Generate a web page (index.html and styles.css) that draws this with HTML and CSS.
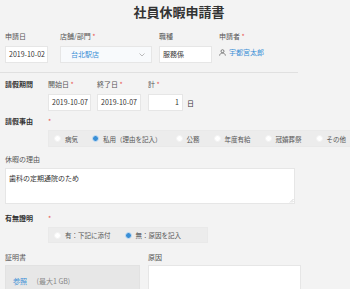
FILE: index.html
```html
<!DOCTYPE html>
<html lang="ja">
<head>
  <meta charset="UTF-8" />
  <title>社員休暇申請書</title>
  <link rel="stylesheet" href="styles.css">
</head>
<body>

<h1 class="title">社員休暇申請書</h1>

<div class="row-top">
  <div class="field f-date">
    <div class="label">申請日</div>
    <div class="input">2019-10-02</div>
  </div>
  <div class="field f-dept">
    <div class="label">店舗/部門 <span class="req">*</span></div>
    <div class="input select">
      <span class="link">台北駅店</span>
      <svg class="chevron" width="6" height="4" viewBox="0 0 6 4"><path d="M0.5 0.5 L3 3 L5.5 0.5" fill="none" stroke="#aaa" stroke-width="0.8"/></svg>
    </div>
  </div>
  <div class="field f-job">
    <div class="label">職種</div>
    <div class="input">服務係</div>
  </div>
  <div class="field">
    <div class="label">申請者 <span class="req">*</span></div>
    <div class="user">
      <svg width="7" height="7" viewBox="0 0 7 7"><circle cx="3.5" cy="2.2" r="1.5" fill="none" stroke="#666" stroke-width="0.8"/><path d="M0.6 6.6 C0.8 4.8 2 4.1 3.5 4.1 C5 4.1 6.2 4.8 6.4 6.6" fill="none" stroke="#666" stroke-width="0.8"/></svg>
      <span class="link">宇都宮太郎</span>
    </div>
  </div>
</div>

<div class="divider"></div>

<div class="section s-period">
  <div class="section-label">請假期間</div>
  <div class="field f-start">
    <div class="label">開始日 <span class="req">*</span></div>
    <div class="input">2019-10-07</div>
  </div>
  <div class="field f-end">
    <div class="label">終了日 <span class="req">*</span></div>
    <div class="input">2019-10-07</div>
  </div>
  <div class="field">
    <div class="label">計 <span class="req">*</span></div>
    <div class="days">
      <div class="input num">1</div>
      <span class="unit">日</span>
    </div>
  </div>
</div>

<div class="section s-reason">
  <div class="section-label">請假事由</div>
  <div class="field f-wide">
    <div class="label"><span class="req">*</span></div>
    <div class="radio-group">
      <span class="radio"><i class="dot"></i>病気</span>
      <span class="radio"><i class="dot on"></i>私用（理由を記入）</span>
      <span class="radio"><i class="dot"></i>公務</span>
      <span class="radio"><i class="dot"></i>年度有給</span>
      <span class="radio"><i class="dot"></i>冠婚葬祭</span>
      <span class="radio"><i class="dot"></i>その他</span>
    </div>
  </div>
</div>

<div class="block b-why">
  <div class="label">休暇の理由</div>
  <div class="textarea">
    歯科の定期通院のため
    <svg class="grip" width="5" height="5" viewBox="0 0 5 5"><path d="M4.5 1 L1 4.5 M4.5 3 L3 4.5" stroke="#bbb" stroke-width="0.6"/></svg>
  </div>
</div>

<div class="section s-proof">
  <div class="section-label">有無證明</div>
  <div class="field">
    <div class="label"><span class="req">*</span></div>
    <div class="radio-group short">
      <span class="radio"><i class="dot"></i>有：下記に添付</span>
      <span class="radio"><i class="dot on"></i>無：原因を記入</span>
    </div>
  </div>
</div>

<div class="row-bottom">
  <div class="field f-file">
    <div class="label">証明書</div>
    <div class="file-box">
      <span class="link">参照</span>
      <span class="limit">(最大1 GB)</span>
    </div>
  </div>
  <div class="field f-cause">
    <div class="label">原因</div>
    <div class="cause-box"></div>
  </div>
</div>

</body>
</html>
```

FILE: styles.css
```css
* {
  box-sizing: border-box;
}

body {
  margin: 0;
  width: 350px;
  height: 289px;
  overflow: hidden;
  background: #f3f3f3;
  font-family: "Noto Sans CJK JP", "Noto Sans", sans-serif;
  font-size: 7px;
  color: #555;
}

.title {
  margin: 0;
  padding: 4px 0 0 8px;
  height: 26px;
  text-align: center;
  font-size: 13px;
  line-height: 16px;
  color: #333;
}

.label {
  height: 10px;
  line-height: 10px;
  margin-bottom: 5px;
  white-space: nowrap;
}

.req {
  color: #e8584f;
}

.link {
  color: #3a8fd6;
}

.input {
  height: 17px;
  line-height: 15px;
  padding: 0 3px;
  background: #fff;
  border: 1px solid #e6e6e6;
  color: #333;
  white-space: nowrap;
}

.row-top {
  display: flex;
  gap: 7px;
  padding: 5px 0 0 5px;
}

.f-date { width: 48px; }
.f-date .input { width: 43px; }
.f-dept { width: 92px; }
.f-job { width: 53px; }

.select {
  display: flex;
  align-items: center;
  justify-content: space-between;
  padding: 0 6px 0 10px;
  background: #f8fafc;
}

.user {
  display: flex;
  align-items: center;
  gap: 3px;
  height: 12px;
}

.divider {
  width: 298px;
  height: 1px;
  margin-top: 9px;
  background: #e0e0e0;
}

.section {
  display: flex;
  padding-left: 5px;
}

.section-label {
  width: 43px;
  flex-shrink: 0;
  line-height: 10px;
  font-weight: bold;
  color: #333;
}

.s-period {
  margin-top: 6px;
}

.f-start { width: 43px; margin-right: 6px; }
.f-end { width: 44px; margin-right: 7px; }

.days {
  display: flex;
  align-items: center;
  gap: 4px;
}

.num {
  width: 35px;
  text-align: right;
}

.unit {
  color: #333;
}

.s-reason {
  margin-top: 5px;
}

.f-wide {
  width: 302px;
  overflow: hidden;
}

.s-reason .label,
.s-proof .label {
  margin-bottom: 4px;
}

.radio-group {
  display: flex;
  align-items: center;
  height: 17px;
  padding: 0 12px 0 5px;
  background: #ececec;
  border: 1px solid #e9e9e9;
  white-space: nowrap;
  font-size: 6.5px;
  color: #555;
}

.s-reason .radio-group {
  width: max-content;
}

.radio {
  display: flex;
  align-items: center;
  gap: 4px;
  margin-right: 14px;
}

.dot {
  display: block;
  width: 7px;
  height: 7px;
  border-radius: 50%;
  background: #fff;
  border: 1px solid #f2f2f2;
}

.dot.on {
  background: #3a8fd6;
  border: 1px solid #cfe3f5;
}

.b-why {
  margin-top: 7px;
  padding-left: 5px;
}

.b-why .label {
  margin-bottom: 4px;
}

.textarea {
  position: relative;
  width: 290px;
  height: 36px;
  padding: 4px 3px;
  line-height: 10px;
  background: #fff;
  border: 1px solid #e6e6e6;
  color: #333;
}

.grip {
  position: absolute;
  right: 0;
  bottom: 0;
}

.s-proof {
  margin-top: 9px;
}

.s-proof .radio-group {
  height: 16px;
}

.row-bottom {
  display: flex;
  gap: 8px;
  margin-top: 9px;
  padding-left: 5px;
}

.row-bottom .label {
  margin-bottom: 3px;
}

.f-file { width: 135px; }

.file-box {
  height: 24px;
  padding: 10px 7px 0;
  line-height: 10px;
  background: #e7e7e7;
  border: 1px solid #e2e2e2;
  border-bottom: none;
}

.limit {
  margin-left: 8px;
  color: #888;
}

.f-cause { width: 153px; }

.cause-box {
  height: 24px;
  background: #fff;
  border: 1px solid #e6e6e6;
  border-bottom: none;
}
```
